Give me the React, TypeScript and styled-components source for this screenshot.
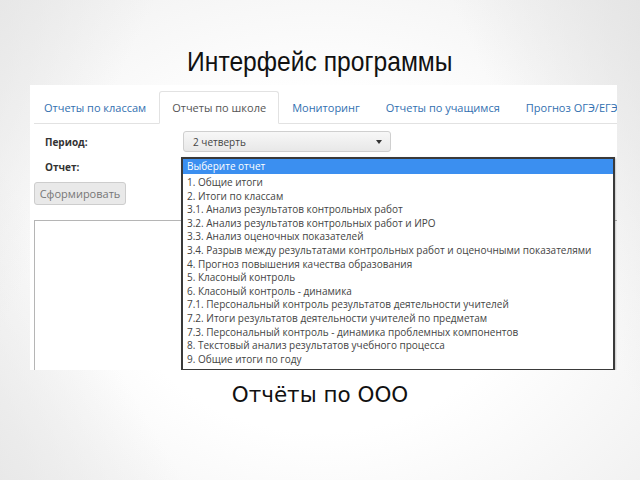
import { FC } from 'react';
import styled, { createGlobalStyle } from 'styled-components';

const tabs = [
  'Отчеты по классам',
  'Отчеты по школе',
  'Мониторинг',
  'Отчеты по учащимся',
  'Прогноз ОГЭ/ЕГЭ',
];

const reports = [
  'Выберите отчет',
  '1. Общие итоги',
  '2. Итоги по классам',
  '3.1. Анализ результатов контрольных работ',
  '3.2. Анализ результатов контрольных работ и ИРО',
  '3.3. Анализ оценочных показателей',
  '3.4. Разрыв между результатами контрольных работ и оценочными показателями',
  '4. Прогноз повышения качества образования',
  '5. Класоный контроль',
  '6. Класоный контроль - динамика',
  '7.1. Персональный контроль результатов деятельности учителей',
  '7.2. Итоги результатов деятельности учителей по предметам',
  '7.3. Персональный контроль - динамика проблемных компонентов',
  '8. Текстовый анализ результатов учебного процесса',
  '9. Общие итоги по году',
];

const App: FC = () => {
  return (
    <Slide>
      <GlobalStyle />
      <Title>
        <span>Интерфейс программы</span>
      </Title>
      <Shot>
        <Tabs>
          {tabs.map((t, i) => (
            <Tab key={t} $active={i === 1} $first={i === 0}>{t}</Tab>
          ))}
        </Tabs>
        <Form>
          <Row>
            <Label>Период:</Label>
            <Select>
              2 четверть
              <Caret />
            </Select>
          </Row>
          <Row>
            <Label>Отчет:</Label>
          </Row>
          <Button>Сформировать</Button>
          <Output />
          <ListBox>
            {reports.map((r, i) => (
              <Option key={r} $selected={i === 0}>{r}</Option>
            ))}
          </ListBox>
        </Form>
      </Shot>
      <Caption>Отчёты по ООО</Caption>
    </Slide>
  );
};

export default App;

const GlobalStyle = createGlobalStyle`
  html, body {
    margin: 0;
    padding: 0;
    width: 640px;
    height: 480px;
    overflow: hidden;
  }
`;

const Slide = styled.div`
  width: 640px;
  height: 480px;
  box-sizing: border-box;
  display: flex;
  flex-direction: column;
  background:
    linear-gradient(115deg, rgba(228, 228, 228, 0.7) 0%, rgba(255, 255, 255, 0) 18%),
    linear-gradient(245deg, rgba(226, 226, 226, 0.8) 0%, rgba(255, 255, 255, 0) 22%),
    linear-gradient(60deg, rgba(230, 230, 230, 0.8) 0%, rgba(255, 255, 255, 0) 20%),
    radial-gradient(ellipse at 50% 55%, #ffffff 45%, #efefef 100%);
`;

const Title = styled.h1`
  margin: 0;
  padding-top: 45px;
  height: 40px;
  display: flex;
  justify-content: center;
  font-family: 'Liberation Sans', sans-serif;
  font-weight: 400;
  font-size: 28px;
  line-height: 34px;
  color: #111;

  > span {
    display: inline-block;
    transform: scaleX(0.88);
    white-space: nowrap;
  }
`;

const Shot = styled.div`
  margin-left: 30px;
  width: 587px;
  height: 285px;
  background: #fff;
  overflow: hidden;
  font-family: 'Open Sans', sans-serif;
`;

const Tabs = styled.div`
  display: flex;
  margin: 6px 0 0 4px;
  border-bottom: 1px solid #e2e2e2;
  height: 32px;
`;

const Tab = styled.div<{ $active?: boolean; $first?: boolean }>`
  padding: 0 12px 0 ${p => (p.$first ? 9 : 12)}px;
  margin-bottom: -1px;
  display: flex;
  align-items: center;
  font-size: 11px;
  white-space: nowrap;
  color: ${p => (p.$active ? '#555' : '#3270b0')};
  background: ${p => (p.$active ? '#fff' : 'transparent')};
  border: 1px solid ${p => (p.$active ? '#e2e2e2' : 'transparent')};
  border-bottom-color: ${p => (p.$active ? '#fff' : 'transparent')};
  border-radius: 3px 3px 0 0;
`;

const Form = styled.div`
  position: relative;
  padding: 6px 0 0 4px;
`;

const Row = styled.div`
  display: flex;
  align-items: center;
  height: 23px;
  margin-bottom: 2px;
`;

const Label = styled.div`
  width: 149px;
  box-sizing: border-box;
  padding-left: 11px;
  font-size: 10px;
  font-weight: 700;
  color: #333;
`;

const Select = styled.div`
  position: relative;
  width: 208px;
  height: 21px;
  box-sizing: border-box;
  padding-left: 9px;
  display: flex;
  align-items: center;
  font-size: 10px;
  color: #444;
  border: 1px solid #cfcfcf;
  border-radius: 3px;
  background: linear-gradient(#f7f7f7, #e8e8e8);
`;

const Caret = styled.span`
  position: absolute;
  right: 8px;
  top: 8px;
  border-left: 3px solid transparent;
  border-right: 3px solid transparent;
  border-top: 4px solid #333;
`;

const Button = styled.div`
  width: 92px;
  height: 23px;
  box-sizing: border-box;
  display: flex;
  align-items: center;
  justify-content: center;
  font-size: 11px;
  color: #777;
  background: #e9e9e9;
  border: 1px solid #cdcdcd;
  border-radius: 3px;
  margin-top: 4px;
`;

const Output = styled.div`
  margin-top: 15px;
  height: 160px;
  border-top: 1px solid #b5b5b5;
  border-left: 1px solid #b5b5b5;
`;

const ListBox = styled.div`
  position: absolute;
  left: 151px;
  top: 33px;
  width: 434px;
  height: 214px;
  box-sizing: border-box;
  border: 2px solid #3a3a3a;
  background: #fff;
  box-shadow: 1px 1px 2px rgba(0, 0, 0, 0.25);
`;

const Option = styled.div<{ $selected?: boolean }>`
  height: 13.6px;
  line-height: 13.6px;
  padding-left: 4px;
  font-size: 10px;
  white-space: nowrap;
  color: ${p => (p.$selected ? '#fff' : '#444')};
  background: ${p => (p.$selected ? '#3b8ff0' : 'transparent')};
  &:first-child {
    height: 15px;
    line-height: 15px;
    margin-bottom: 2px;
  }
`;

const Caption = styled.div`
  margin-top: 12px;
  text-align: center;
  font-family: 'DejaVu Sans', sans-serif;
  font-size: 21.5px;
  color: #111;
`;
